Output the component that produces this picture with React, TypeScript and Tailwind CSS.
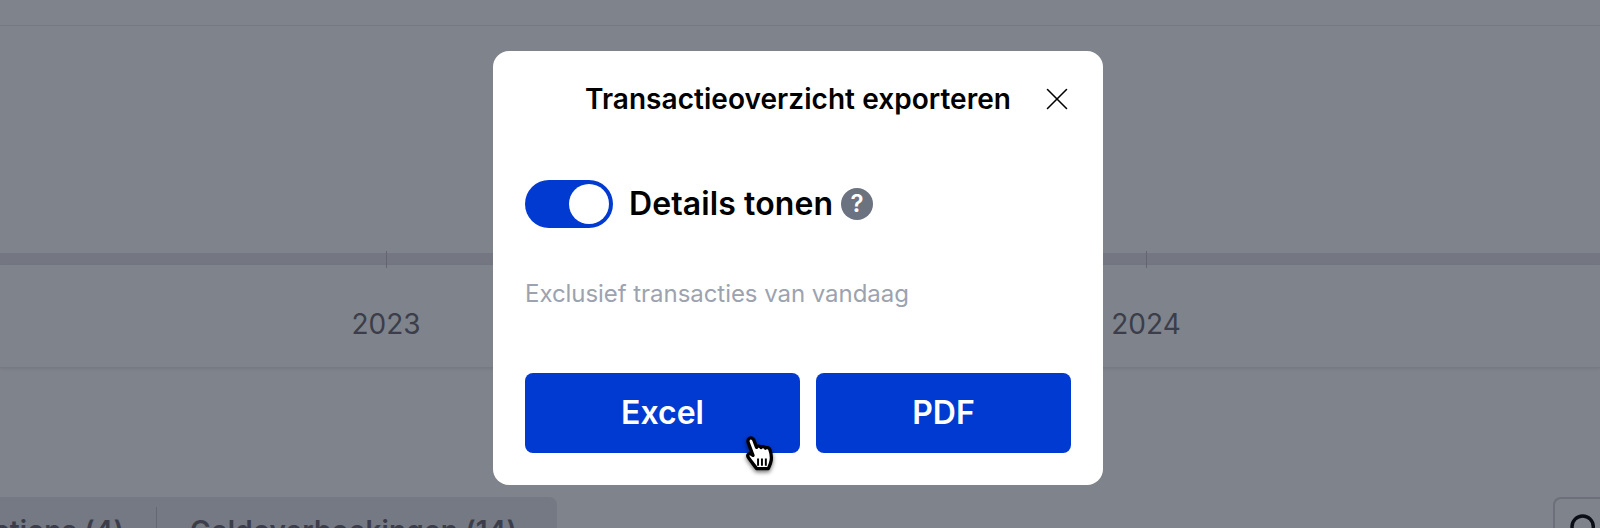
import React from 'react';
import { Search, X } from 'lucide-react';

function HandCursor() {
  return (
    <svg width="32" height="37" viewBox="0 0 32 38" className="drop-shadow-[0_2px_2px_rgba(0,0,0,0.55)]">
      <path
        d="M5 2.5c2-1.2 4-.2 4.800 2l2.700 7.200c.3-1.700 3.600-2 4.600.2.6-1.400 3.700-1.500 4.500.6 1-1 3.700-.8 4.500 1.400 1 2.600 1.900 7 1.400 11-.5 3.800-2 6.500-3 8.600H12.500c-2-3-5.500-7-8.500-11.500-1.500-2.300.2-4.600 2.500-3.600l2.300 1.500L3.800 6.500C3.400 5 3.800 3.300 5 2.500z"
        fill="#ffffff"
        stroke="#000000"
        strokeWidth="3.400"
        strokeLinejoin="round"
      />
      <path d="M14 23v7.500M18 23v7.500M22 23v7.500" stroke="#000000" strokeWidth="2" fill="none" />
    </svg>
  );
}

function Background() {
  return (
    <div className="h-[528px] overflow-hidden bg-[#7f838b] flex flex-col">
      <div className="h-[26px] shrink-0 border-b border-[#767985]" />
      <div className="h-[227px] shrink-0" />

      {/* timeline */}
      <div className="h-[12px] shrink-0 bg-[#747782] grid grid-cols-[760px_760px] pl-[6px]">
        <div className="flex justify-center"><div className="w-px h-[17px] -mt-[2px] bg-[#636672]" /></div>
        <div className="flex justify-center"><div className="w-px h-[17px] -mt-[2px] bg-[#636672]" /></div>
      </div>
      <div className="h-[103px] shrink-0 grid grid-cols-[760px_760px] pl-[6px] border-b border-[#777a83] shadow-[0_1px_3px_rgba(0,0,0,0.08)]">
        <div className="text-center text-[28px] leading-[32px] pt-[43px] text-[#3b3e4a]">2023</div>
        <div className="text-center text-[28px] leading-[32px] pt-[43px] text-[#3b3e4a]">2024</div>
      </div>

      {/* tabs + search */}
      <div className="mt-[129px] flex justify-between">
        <div className="w-[557px] h-[60px] bg-[#757983] rounded-tr-[8px] flex">
          <div className="w-[157px] h-[40px] mt-[10px] border-r border-[#656873] pr-[32px] flex justify-end overflow-hidden">
            <span className="text-[28px] leading-[36px] pt-[6px] font-semibold tracking-[0.1px] text-[#3b3e4a] whitespace-nowrap">Transactions (4)</span>
          </div>
          <div className="pl-[33px] pt-[16px] text-[28px] leading-[36px] font-semibold tracking-[0.14px] text-[#3b3e4a] whitespace-nowrap">
            Geldoverboekingen (14)
          </div>
        </div>
        <div className="w-[47px] h-[60px] border-2 border-r-0 border-[#6d707b] rounded-l-[8px] pl-[13px] pt-[13px]">
          <Search className="w-[32px] h-[32px] text-[#0b0d17]" strokeWidth={2.6} />
        </div>
      </div>
    </div>
  );
}

export default function App() {
  return (
    <div className="relative w-[1600px] h-[528px] overflow-hidden font-['Inter',sans-serif]">
      <Background />

      {/* Modal */}
      <div className="absolute left-[493px] top-[51px] w-[610px] h-[434px] bg-white rounded-[16px] px-[32px] flex flex-col">
        <div className="relative h-[96px] shrink-0 flex items-center justify-center">
          <h2 className="text-[28px] font-semibold text-black leading-[36px] tracking-[0.05px] whitespace-nowrap">
            Transactieoverzicht exporteren
          </h2>
          <X className="absolute right-[-5px] top-[29px] w-[38px] h-[38px] text-black" strokeWidth={1} />
        </div>

        <div className="mt-[33px] flex items-center h-[48px]">
          <div className="w-[88px] h-[48px] rounded-full bg-[#003ad1] p-[4px] flex justify-end">
            <div className="w-[40px] h-[40px] rounded-full bg-white" />
          </div>
          <span className="ml-[16px] text-[32px] font-semibold text-black leading-[40px] tracking-[0.1px]">Details tonen</span>
          <div className="ml-[8px] w-[32px] h-[32px] rounded-full bg-[#6b7280] flex items-center justify-center text-white text-[24px] font-semibold">?</div>
        </div>

        <p className="mt-[48px] text-[24px] leading-[36px] tracking-[-0.05px] text-[#9ca3af]">Exclusief transacties van vandaag</p>

        <div className="mt-[61px] flex gap-[16px]">
          <button className="w-[275px] h-[80px] rounded-[8px] bg-[#003ad1] text-white text-[32px] font-semibold">Excel</button>
          <button className="w-[255px] h-[80px] rounded-[8px] bg-[#003ad1] text-white text-[32px] font-semibold">PDF</button>
        </div>
      </div>

      {/* mouse pointer from the capture */}
      <div className="absolute left-[744px] top-[436px]">
        <HandCursor />
      </div>
    </div>
  );
}
